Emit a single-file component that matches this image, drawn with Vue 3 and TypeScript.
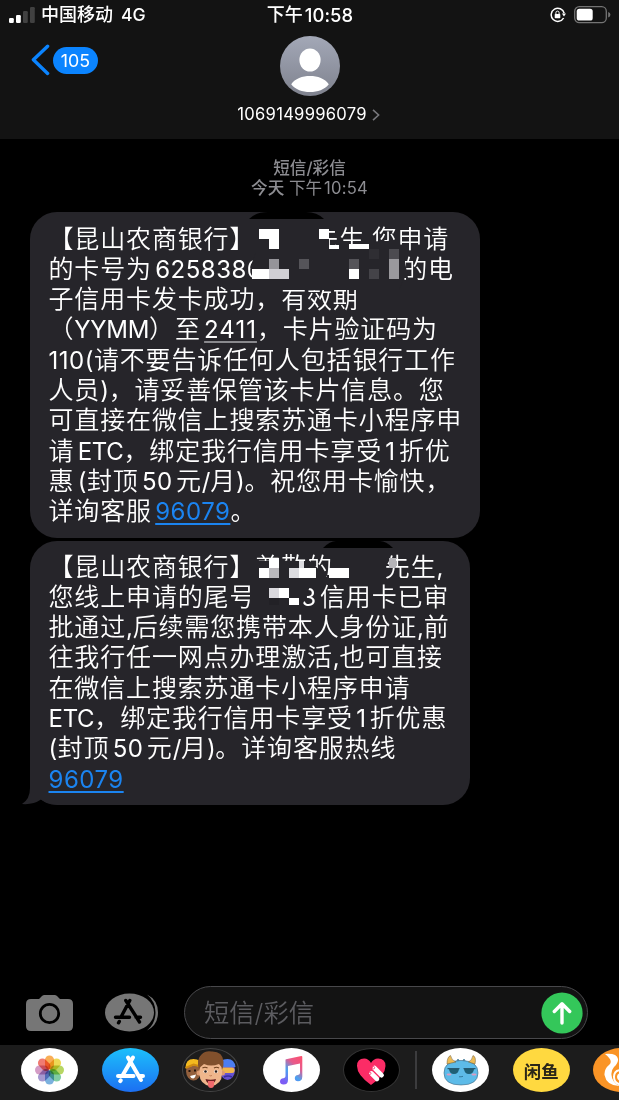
<template>
  <div class="phone">
    <header class="header">
      <div class="status">
        <div class="status__left">
          <svg class="signal" viewBox="0 0 26 16">
            <rect x="0" y="11" width="4.8" height="5" rx="1.2" fill="#fff" />
            <rect x="7" y="8" width="4.8" height="8" rx="1.2" fill="#fff" />
            <rect x="14" y="4" width="4.8" height="12" rx="1.2" fill="#414141" />
            <rect x="21" y="0" width="4.8" height="16" rx="1.2" fill="#414141" />
          </svg>
          <span class="carrier">中国移动</span>
          <span class="network">4G</span>
        </div>
        <div class="status__time"><span>下午</span><span class="clock">10:58</span></div>
        <div class="status__right">
          <svg class="lock" viewBox="0 0 16 16" fill="none">
            <path d="M14.2 6.2A6.6 6.6 0 1 0 13.6 11" stroke="#fff" stroke-width="1.5" />
            <path d="M11.9 6.6h4.1l-2 3z" fill="#fff" />
            <rect x="4.7" y="7" width="5.6" height="4.3" rx=".7" fill="#fff" />
            <path d="M5.9 7.3V5.7a1.6 1.6 0 0 1 3.2 0v1.6" stroke="#fff" stroke-width="1" />
          </svg>
          <svg class="battery" viewBox="0 0 37 18">
            <rect x=".7" y=".7" width="31.6" height="16" rx="4.6" fill="none" stroke="#747474" stroke-width="1.3" />
            <rect x="2.7" y="2.8" width="16" height="11.8" rx="2.6" fill="#fff" />
            <path d="M34.2 6v5.6q2.2-.8 2.2-2.8t-2.2-2.8z" fill="#747474" />
          </svg>
        </div>
      </div>
      <div class="nav">
        <div class="back">
          <svg class="back__arrow" viewBox="0 0 20 32" fill="none">
            <path d="M16.6 2.2 2.4 15.8l14.2 13.6" stroke="#0b84ff" stroke-width="3.4" stroke-linecap="round" stroke-linejoin="round" />
          </svg>
          <span class="back__count">105</span>
        </div>
        <div class="contact">
          <svg class="contact__avatar" viewBox="0 0 60 60">
            <defs>
              <linearGradient id="avatar" x2="0" y2="1">
                <stop stop-color="#a3a8b7" />
                <stop offset="1" stop-color="#7f828e" />
              </linearGradient>
            </defs>
            <circle cx="30" cy="30" r="30" fill="url(#avatar)" />
            <ellipse cx="30" cy="24" rx="10.6" ry="11.6" fill="#fff" />
            <path d="M11.2 48.2C15 42.6 22.4 40 30 40s15 2.6 18.8 8.2C44.5 53.6 37.8 56 30 56s-14.5-2.4-18.8-7.8z" fill="#fff" />
          </svg>
          <div class="contact__name">
            {{ sender }}
            <svg class="contact__chevron" viewBox="0 0 8 12" fill="none">
              <path d="m1 .9 5.6 5.1L1 11.1" stroke="#77777c" stroke-width="1.6" />
            </svg>
          </div>
        </div>
      </div>
    </header>

    <main class="thread">
      <div class="stamp">
        <div>短信/彩信</div>
        <div><b>今天</b> 下午<span class="stamp__time">10:54</span></div>
      </div>
      <div
        v-for="message in messages"
        :key="message.id"
        :class="['bubble', `bubble--${message.id}`]"
      >
        <div v-for="(line, i) in message.lines" :key="i" class="line">
          <span v-for="(run, j) in splitRuns(line)" :key="j" :class="run.kind">{{ run.text }}</span>
        </div>
        <svg class="mask" :viewBox="`0 0 450 ${message.height}`">
          <path :d="message.notch" fill="#000" />
          <path :d="message.cover" fill="#26252a" />
          <rect
            v-for="(b, k) in message.blocks"
            :key="k"
            :x="b[0]"
            :y="b[1]"
            :width="b[2]"
            :height="b[3]"
            :fill="b[4]"
            shape-rendering="crispEdges"
          />
        </svg>
        <svg v-if="message.tail" class="tail" viewBox="0 0 34 28">
          <path d="M8 0v11Q8 22 0 27 11 28 19 22.5q6 4.5 15 5V0z" fill="#26252a" />
        </svg>
      </div>
    </main>

    <section class="composer">
      <svg class="camera" viewBox="0 0 47 36">
        <path d="M5 4h8l3-3q1-1 2.5-1h10q1.5 0 2.5 1l3 3h8q5 0 5 5v22q0 5-5 5H5q-5 0-5-5V9q0-5 5-5z" fill="#767676" />
        <circle cx="23.5" cy="18.5" r="9.2" fill="none" stroke="#000" stroke-width="2.8" />
      </svg>
      <svg class="apps" viewBox="0 0 53 39">
        <path d="M42 1.5Q53 7 53 19.5T42 37.5q8.500-7 8.500-18T42 1.500z" fill="#767676" />
        <ellipse cx="24.5" cy="19.5" rx="24.5" ry="19" fill="#767676" />
        <path
          d="M24.8 7.5 16 24M20.8 7.5 34.5 29M10.5 24.2h14M31 24.2h4.5M14.3 28.5l-.8 1.3"
          fill="none"
          stroke="#000"
          stroke-width="3.4"
          stroke-linecap="round"
        />
      </svg>
      <div class="field">
        <span class="field__hint">短信/彩信</span>
        <svg class="send" viewBox="0 0 42 42">
          <circle cx="21" cy="21" r="20.6" fill="#34c75a" />
          <path d="M21 31V12M13.3 19.5 21 11.8l7.7 7.7" fill="none" stroke="#fff" stroke-width="3.4" stroke-linecap="round" stroke-linejoin="round" />
        </svg>
      </div>
    </section>

    <footer class="tray">
      <div class="pill pill--white">
        <svg viewBox="0 0 57 44">
          <g class="petals">
            <rect
              v-for="(color, i) in petals"
              :key="color"
              x="24"
              y="7.5"
              width="9"
              height="14"
              rx="4.5"
              :fill="color"
              :transform="`rotate(${i * 45} 28.5 22)`"
            />
          </g>
        </svg>
      </div>
      <div class="pill pill--store">
        <svg viewBox="0 0 57 44" fill="none" stroke="#fff" stroke-width="4" stroke-linecap="round">
          <path d="M31 9.5 20.5 27.5M26 9.5 39 32M16 28h15.5M37.5 28h3.5M18.8 32.3l-.6.9" />
        </svg>
      </div>
      <div class="pill pill--outline">
        <svg viewBox="0 0 57 44">
          <ellipse cx="11.5" cy="23" rx="7.5" ry="9.5" fill="#93603d" />
          <path d="M3.5 20q0-9 8-9t8 8L12 17.5z" fill="#f3b91f" />
          <path d="m3.5 20 8-3.5 7 2" stroke="#cf8a12" stroke-width="2" fill="none" />
          <path d="M6.5 23h2M12 22.5h2" stroke="#24140d" stroke-width="2" />
          <path d="m8 28 6-1.5q-1 4-3 4T8 28z" fill="#fff" />
          <ellipse cx="45.5" cy="22" rx="7.5" ry="10" fill="#6652d2" />
          <path d="M37 19q0-8 8.5-8 7 0 8 8z" fill="#4c7df0" />
          <rect x="38.5" y="19.5" width="14" height="5.5" rx="2.5" fill="#f0b64a" />
          <path d="M42 29q4-2 8 0" stroke="#3b2d9c" stroke-width="1.5" fill="none" />
          <circle cx="17" cy="25" r="2.5" fill="#dd9a70" />
          <circle cx="40.5" cy="25" r="2.5" fill="#dd9a70" />
          <path d="M17.5 19q0-9 11.2-9T40 19v7q0 10-11.3 12.5Q17.5 36 17.5 26z" fill="#efb68c" />
          <path d="M17 22q-3-11 2.500-15.500 4-4 10-3 11-.5 12 10 .5 4-1.500 8.500-.5-4-3-6-8 3-15 0-3.500 2-5 6z" fill="#81502c" />
          <path d="M20.5 20q2.5-1.5 5 0M32 20q2.5-1.5 5 0" stroke="#70421f" stroke-width="1.2" fill="none" />
          <ellipse cx="23.5" cy="23.5" rx="2" ry="1.6" fill="#fff" />
          <ellipse cx="34" cy="23.5" rx="2" ry="1.6" fill="#fff" />
          <circle cx="23.5" cy="23.5" r="1.3" fill="#2c1a12" />
          <circle cx="34" cy="23.5" r="1.3" fill="#2c1a12" />
          <path d="M27.5 27.5q1.2.7 2.4 0" stroke="#c27d56" fill="none" />
          <path d="M23.5 31q5 1.5 10.5 0-1 4.5-5.3 4.5t-5.2-4.5z" fill="#6d2020" />
          <path d="M26 33h6v4q0 3-3 3t-3-3z" fill="#f0696c" />
        </svg>
      </div>
      <div class="pill pill--white">
        <svg viewBox="0 0 57 44">
          <defs>
            <linearGradient id="note" x1="1" y1="0" x2=".35" y2="1">
              <stop stop-color="#ff4f6b" />
              <stop offset=".35" stop-color="#e75a8c" />
              <stop offset=".65" stop-color="#4aa3f0" />
              <stop offset="1" stop-color="#7d5cf5" />
            </linearGradient>
          </defs>
          <path d="M23 11.3 38.3 8q1 0 1 1v19.5q0 4.7-4.3 4.7-3.2 0-3.2-2.9t3.2-3.3q2-.3 2-2V15.5L25 18v14q0 4.5-4.5 4.5-3.5 0-3.5-2.9 0-3 3.5-3.4 2-.3 2-2V12q0-.6.5-.7z" fill="url(#note)" />
        </svg>
      </div>
      <div class="pill pill--heart">
        <svg viewBox="0 0 57 44">
          <path d="M28 37Q14 27 14 18q0-7.5 7.2-7.5Q25.5 10.5 28 15q2.5-4.5 7-4.5 7.500 0 7.500 7.500 0 9-14.500 19z" fill="#fb2c66" />
          <g transform="rotate(45 34 25)" fill="#fff">
            <rect x="26.5" y="21" width="14.5" height="4.6" rx="2" />
            <rect x="28" y="27" width="12.5" height="4.6" rx="2" />
          </g>
          <g fill="none" stroke="#fb2c66" stroke-width=".8">
            <circle cx="30.5" cy="19.7" r="1.2" />
            <circle cx="26.8" cy="25.3" r="1.2" />
          </g>
        </svg>
      </div>
      <i class="divider"></i>
      <div class="pill pill--white">
        <svg viewBox="0 0 57 44">
          <path d="M12 25q0-12 16-12.5h2Q46 13 46 25q0 12-17 12T12 25z" fill="#5dbbe8" stroke="#3d6480" stroke-width=".6" />
          <path d="M15 16q0-7 3.5-8.5 1 5 5.5 6.5-5 1-9 2zM43 16q1.5-7-2-8.5-1 5-4.5 6.5 3.5 1 6.5 2z" fill="#ecbb55" stroke="#6b5836" stroke-width=".5" />
          <path d="M17 21h10q-.5 5-5 5t-5-5zM32 21h10q-.5 5-5 5t-5-5z" fill="#1f6076" />
          <path d="M15.5 20.7h12M31.5 20.7h12" stroke="#1b4457" stroke-width="1" />
          <path d="m25 13 1-2 1 2M31 13l1-2 1 2M27 28.5q1 1 2 0 1 1 2-.5" fill="none" stroke="#286a8c" stroke-width=".8" />
          <ellipse cx="17" cy="26.5" rx="2.5" ry="1" fill="#df9bc0" />
          <ellipse cx="42" cy="26.5" rx="2.5" ry="1" fill="#df9bc0" />
        </svg>
      </div>
      <div class="pill pill--yellow"><span>闲鱼</span></div>
      <div class="pill pill--orange">
        <svg viewBox="0 0 57 44" fill="none">
          <path d="M12 6q12-1 13 5 .5 4-4 8-3 3.500-2.500 8 .5 8 9 11-14 0-16-11-.5-6 5-10.500 4-4-4.500-10.500z" fill="#fff" />
          <path d="M30 37q-9-1-9-8t7-7M30 33q-5-1-5-4t4-3" stroke="#fff" stroke-width="2" />
        </svg>
      </div>
    </footer>
  </div>
</template>

<script setup lang="ts">
interface Run {
  text: string
  kind: string
}

type Block = [number, number, number, number, string]

interface Message {
  id: string
  height: number
  lines: string[]
  notch: string
  cover: string
  blocks: Block[]
  tail?: boolean
}

const sender = '1069149996079'

const petals = ['#f79a2ccc', '#e8cf2acc', '#a5cc3ccc', '#5fbf8ccc', '#5a9ed6cc', '#8f7fc4cc', '#c983b8cc', '#ec5a4fcc']

// "~" is a short and "=" a long stretch of censored text, a space is a thin gap, [..] a link, {..} a detected date
const messages: Message[] = [
  {
    id: 'first',
    height: 326,
    lines: [
      '【昆山农商银行】~先生,您申请',
      '的卡号为 6258386=的电',
      '子信用卡发卡成功，有效期',
      '（YYMM）至 {2411}，卡片验证码为',
      '110(请不要告诉任何人包括银行工作',
      '人员)，请妥善保管该卡片信息。您',
      '可直接在微信上搜索苏通卡小程序申',
      '请 ETC，绑定我行信用卡享受 1 折优',
      '惠 (封顶 50 元/月)。祝您用卡愉快，',
      '详询客服 [96079]。'
    ],
    notch: 'M219 7Q226 0 238 0H276Q287 0 294 7z',
    cover: 'M226 12H299V34H338V31H344L350 29H367V44H374L378 66H374L369 78H222V64Q218 58 223 48L226 40z',
    blocks: [
      [229, 17, 20, 10, '#fff'],
      [239, 27, 10, 10, '#fff'],
      [289, 17, 10, 10, '#fff'],
      [299, 33, 10, 4, '#fff'],
      [319, 32, 20, 5, '#fff'],
      [339, 37, 10, 10, '#2f2e33'],
      [359, 37, 10, 10, '#4c4b50'],
      [359, 47, 10, 20, '#9a999d'],
      [319, 47, 10, 10, '#555459'],
      [319, 57, 10, 10, '#fff'],
      [339, 57, 10, 10, '#444348'],
      [239, 47, 10, 10, '#959499'],
      [269, 47, 10, 10, '#555459'],
      [222, 57, 17, 10, '#fff'],
      [239, 57, 20, 10, '#d0cfd4']
    ]
  },
  {
    id: 'second',
    height: 264,
    lines: [
      '【昆山农商银行】尊敬的~先生,',
      '您线上申请的尾号=3 信用卡已审',
      '批通过,后续需您携带本人身份证,前',
      '往我行任一网点办理激活,也可直接',
      '在微信上搜索苏通卡小程序申请',
      'ETC，绑定我行信用卡享受 1 折优惠',
      '(封顶 50 元/月)。详询客服热线',
      '[96079]'
    ],
    notch: 'M293 7Q300 0 306 0H350Q356 0 363 7z',
    cover: 'M226 20H280L297 36V34H306V40H226zM220 46H280L276 54L272 66H224V56H220z',
    blocks: [
      [239, 17, 10, 10, '#fff'],
      [229, 27, 10, 10, '#fff'],
      [239, 27, 10, 10, '#b9b8bc'],
      [259, 27, 10, 10, '#dcdce0'],
      [269, 20, 5, 7, '#dcdce0'],
      [269, 27, 17, 10, '#fff'],
      [299, 27, 20, 10, '#fff'],
      [359, 17, 7, 10, '#b5b4b8'],
      [239, 47, 10, 10, '#dad9de'],
      [249, 47, 10, 10, '#fff'],
      [239, 57, 10, 7, '#222126'],
      [259, 57, 10, 7, '#fff']
    ],
    tail: true
  }
]

const splitRuns = (line: string): Run[] => {
  const parts = line.match(/\[[^\]]+\]|\{[^}]+\}|[~=]| |[0-9(]+|[A-Za-z),/]+|[^\[{~= A-Za-z0-9(),/]+/g) ?? []
  return parts.map((text) => {
    if (text[0] === '[') return { text: text.slice(1, -1), kind: 'digits link' }
    if (text[0] === '{') return { text: text.slice(1, -1), kind: 'digits date' }
    if (text === '~') return { text: '', kind: 'hidden' }
    if (text === '=') return { text: '', kind: 'hidden hidden--long' }
    if (text === ' ') return { text: '', kind: 'thin' }
    if (/^[0-9(]+$/.test(text)) return { text, kind: 'digits' }
    return { text, kind: /^[\x00-\x7f]+$/.test(text) ? 'latin' : 'han' }
  })
}
</script>

<style>
body {
  margin: 0;
  background: #000;
}
</style>

<style scoped>
.phone {
  display: flex;
  flex-direction: column;
  width: 619px;
  height: 1100px;
  overflow: hidden;
  background: #000;
  color: #fff;
  font-family: Inter, 'Noto Sans CJK SC', sans-serif;
}

svg {
  display: block;
  flex: none;
}

.header {
  height: 139px;
  background: #131313;
}

.status {
  display: grid;
  grid-template-columns: 1fr auto 1fr;
  align-items: center;
  height: 30px;
  padding: 0 8px 0 9px;
  font-size: 18px;
  font-weight: 500;
}

.status__left,
.status__right,
.status__time {
  display: flex;
  align-items: center;
}

.status__left > span,
.status__time {
  line-height: 26px;
}

.status__right {
  justify-content: flex-end;
  gap: 8px;
}

.status__time {
  gap: 2px;
}

.clock {
  font-size: 18.4px;
  letter-spacing: 0.1px;
}

.signal {
  width: 26px;
  height: 16px;
}

.carrier {
  margin-left: 6px;
}

.network {
  margin-left: 8px;
  font-size: 17.6px;
}

.lock {
  width: 16px;
  height: 16px;
}

.battery {
  width: 37px;
  height: 18px;
}

.nav {
  display: grid;
  grid-template-columns: 1fr auto 1fr;
  align-items: start;
  padding: 6px 0 0 31px;
}

.back {
  display: flex;
  align-items: center;
  gap: 2px;
  padding-top: 8px;
}

.back__arrow {
  width: 20px;
  height: 32px;
}

.back__count {
  display: flex;
  align-items: center;
  justify-content: center;
  width: 45px;
  height: 27px;
  border-radius: 14px;
  background: #0b84ff;
  font-size: 17.8px;
}

.contact {
  display: flex;
  flex-direction: column;
  align-items: center;
  margin-right: 31px;
}

.contact__avatar {
  width: 60px;
  height: 60px;
}

.contact__name {
  display: flex;
  align-items: center;
  gap: 5px;
  margin: 8px 2px 0 0;
  font-size: 16.6px;
  letter-spacing: 0.25px;
  line-height: 21px;
}

.contact__chevron {
  width: 8px;
  height: 12px;
}

.thread {
  flex: 1;
  padding-left: 30px;
}

.stamp {
  height: 53px;
  margin-left: -30px;
  padding-top: 20px;
  color: #8d8d92;
  text-align: center;
  font-size: 16.6px;
  line-height: 19.5px;
}

.stamp div:first-child,
.stamp b {
  font-weight: 500;
}

.stamp__time {
  margin-left: 2px;
  letter-spacing: 0.2px;
}

.bubble {
  position: relative;
  isolation: isolate;
  box-sizing: border-box;
  padding: 9.5px 18.5px;
  border-radius: 27px;
  background: #26252a;
  font-size: 25px;
}

.bubble--first {
  width: 450px;
  height: 326px;
  margin-bottom: 3px;
}

.bubble--second {
  width: 440px;
  height: 264px;
  padding-top: 8.5px;
}

.line {
  display: flex;
  align-items: baseline;
  height: 30.3px;
  line-height: 30.3px;
  white-space: nowrap;
}

/* keeps the baseline of a digits-only line level with the others */
.line::after {
  content: '\200b';
  width: 0;
  font-family: 'Noto Sans CJK SC', sans-serif;
}

.han {
  font-family: 'Noto Sans CJK SC', sans-serif;
  font-weight: 350;
  letter-spacing: 0.85px;
  text-spacing-trim: space-all;
}

.latin {
  font-size: 24px;
  letter-spacing: -0.3px;
}

.digits {
  font-size: 24px;
  letter-spacing: 0.5px;
}

.thin {
  width: 3.3px;
}

.hidden {
  width: 58px;
}

.hidden--long {
  width: 140px;
}

.bubble--second .hidden {
  width: 52px;
}

.bubble--second .hidden--long {
  width: 46px;
}

.link {
  color: #1b84f0;
  text-decoration: underline;
  text-decoration-thickness: 2px;
  text-underline-offset: 3px;
}

.date {
  letter-spacing: 1px;
  text-decoration: underline #8a8a8e 2px;
  text-underline-offset: 3px;
}

.mask {
  position: absolute;
  top: 0;
  left: 0;
  width: 450px;
}

.tail {
  position: absolute;
  z-index: -1;
  left: -8px;
  bottom: 0;
  width: 34px;
  height: 28px;
}

.composer {
  display: flex;
  align-items: center;
  height: 65px;
  padding: 0 31px 0 26px;
}

.camera {
  width: 47px;
  height: 36px;
}

.apps {
  width: 53px;
  height: 39px;
  margin-left: 32px;
}

.field {
  display: flex;
  flex: 1;
  align-items: center;
  justify-content: space-between;
  box-sizing: border-box;
  height: 53px;
  margin-left: 26px;
  padding: 0 4px 0 19px;
  border: 1.5px solid #48484b;
  border-radius: 27px;
  background: #131313;
}

.field__hint {
  margin-bottom: 4px;
  color: #5c5c60;
  font-size: 25.3px;
  font-weight: 350;
}

.send {
  width: 42px;
  height: 42px;
}

.tray {
  display: flex;
  gap: 23.6px;
  height: 52px;
  padding: 3px 0 0 21px;
  background: #1c1c1c;
}

.pill {
  display: flex;
  flex: none;
  align-items: center;
  justify-content: center;
  box-sizing: border-box;
  width: 57px;
  height: 44px;
  border-radius: 28.5px / 22px;
  overflow: hidden;
}

.pill svg {
  width: 57px;
  height: 44px;
}

.pill--white {
  background: #fff;
}

.pill--store {
  background: linear-gradient(#1cc0fb, #1c6ff2);
}

.pill--outline {
  border: 1px solid #444;
  background: #1c1c1c;
}

.pill--heart {
  border: 1px solid #333;
  background: #000;
}

.pill--yellow {
  background: #ffd940;
  color: #2b2718;
  font-size: 17.5px;
  font-weight: 700;
}

.pill--orange {
  background: #fa9426;
}

.petals {
  isolation: isolate;
}

.petals rect {
  mix-blend-mode: multiply;
}

.divider {
  flex: none;
  width: 1.5px;
  height: 38px;
  margin: 3px -8.5px 0;
  background: #3c3c3e;
}
</style>
